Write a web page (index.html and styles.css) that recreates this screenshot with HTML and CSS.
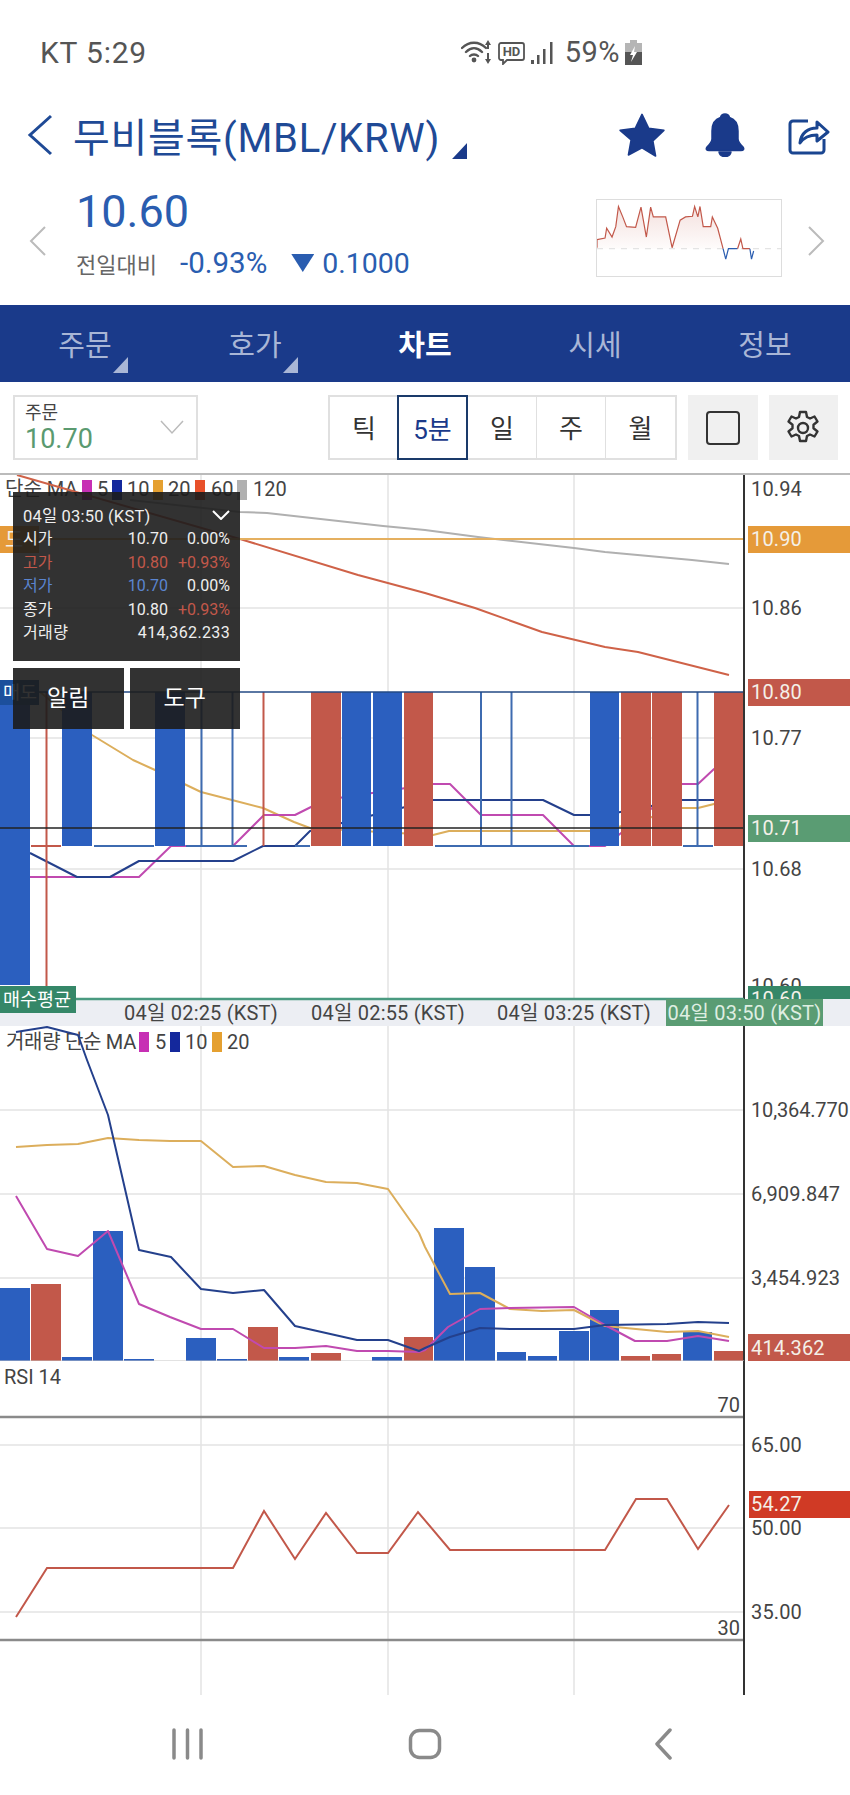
FILE: index.html
```html
<!DOCTYPE html>
<html>
<head>
    <title>무비블록 차트</title>
    <link rel="stylesheet" href="styles.css">
</head>
<body>
    <div class="status-bar">
        <span class="carrier">KT 5:29</span>
        <div class="status-icons">
            <svg class="wifi-icon" width="32" height="25" viewBox="0 0 32 25">
                <path class="st-line" d="M1 8C8 1 18 1 25 8M5 12C10 7 16 7 21 12M9 16C11 14 15 14 17 16"/>
                <circle class="st-fill" cx="13" cy="20" r="2.4"/>
                <path class="st-fill" d="M27 0l3 5h-2v4h-2V5h-2zM26 13h2v6h2l-3 5-3-5h2z"/>
            </svg>
            <svg class="hd-icon" width="27" height="23" viewBox="0 0 27 23">
                <path class="st-thin" d="M3 1h21a2 2 0 0 1 2 2v13a2 2 0 0 1-2 2H9l-4 4v-4H3a2 2 0 0 1-2-2V3a2 2 0 0 1 2-2z"/>
                <text class="hd-text" x="13.5" y="14">HD</text>
            </svg>
            <svg class="signal-icon" width="22" height="22" viewBox="0 0 22 22">
                <rect class="st-fill" x="0" y="18" width="3" height="4"/>
                <rect class="st-fill" x="6" y="13" width="2.5" height="9"/>
                <rect class="st-fill" x="12" y="7" width="2.5" height="15"/>
                <rect class="st-fill" x="19" y="0" width="2.5" height="22"/>
            </svg>
            <span class="battery-text">59%</span>
            <svg class="battery-icon" width="17" height="25" viewBox="0 0 17 25">
                <rect x="5" y="0" width="7" height="3" fill="#b5b5b5"/>
                <rect x="0" y="3" width="17" height="9" fill="#b5b5b5"/>
                <rect x="0" y="12" width="17" height="13" fill="#555"/>
                <path d="M10 6l-5 9h3l-2 7 6-10H9z" fill="#fff"/>
            </svg>
        </div>
    </div>

    <div class="title-bar">
        <svg class="back-icon" width="26" height="42" viewBox="0 0 26 42">
            <path d="M24 2L3 21l21 19"/>
        </svg>
        <span class="coin-name">무비블록(MBL/KRW)</span>
        <span class="corner-mark title-mark"></span>
        <div class="title-actions">
            <svg class="star-icon" width="52" height="48" viewBox="0 0 48 44">
                <path class="navy-fill" d="M24 3l6.2 12.8 14 1.9-10.2 9.8 2.5 13.9L24 33.8l-12.5 6.6L14 26.5 3.8 17.7l14-1.9z"/>
            </svg>
            <svg class="bell-icon" width="40" height="44" viewBox="0 0 40 44">
                <path class="navy-fill" d="M20 1c2.500 0 4 1.500 4.500 3.500C31 6.500 33 12 33 18v8c0 3 2 5 5 8 1.500 2 .5 3.500-2 3.500H4c-2.500 0-3.500-1.500-2-3.500 3-3 5-5 5-8v-8c0-6 2-11.500 8.500-13.500C16 2.500 17.500 1 20 1z"/>
                <path class="navy-fill" d="M14 39h12c-.5 3-3 4.500-6 4.500S14.500 42 14 39z"/>
            </svg>
            <svg class="share-icon" width="42" height="40" viewBox="0 0 42 40">
                <path class="navy-line" d="M20 6H5a3 3 0 0 0-3 3v26a3 3 0 0 0 3 3h28a3 3 0 0 0 3-3V24"/>
                <path class="navy-line" d="M12 28c1-10 8-15 17-15V7l11 10-11 9v-6c-7 0-13 2-17 8z"/>
            </svg>
        </div>
    </div>

    <div class="quote-bar">
        <svg class="quote-arrow arrow-left" width="18" height="30" viewBox="0 0 18 30"><path d="M16 1L2 15l14 14"/></svg>
        <div class="quote-main">
            <div class="price">10.60</div>
            <div class="change-row">
                <span class="change-label">전일대비</span>
                <span class="change-pct">-0.93%</span>
                <span class="down-mark"></span>
                <span class="change-val">0.1000</span>
            </div>
        </div>
        <svg class="sparkline" width="186" height="78" viewBox="1100 598 343 234" preserveAspectRatio="none">
            <defs>
                <linearGradient id="sparkFade" x1="0" y1="0" x2="0" y2="1">
                    <stop offset="0" stop-color="#c2584a" stop-opacity="0.18"/>
                    <stop offset="1" stop-color="#c2584a" stop-opacity="0.02"/>
                </linearGradient>
            </defs>
            <path d="M1100 748V720L1115 715 1118 685 1128 712 1135 680 1140 618 1148 650 1155 680 1172 682 1182 620 1192 712 1200 620 1205 650 1228 650 1240 745 1255 660 1265 650 1278 648 1282 618 1288 650 1292 618 1298 680 1312 680 1315 650 1325 685 1335 748z" fill="url(#sparkFade)"/>
            <path class="spark-base" d="M1100 748H1443"/>
            <polyline class="spark-red" points="1100,745 1100,720 1115,715 1118,685 1128,712 1135,680 1140,618 1148,650 1155,680 1172,682 1182,620 1192,712 1200,620 1205,650 1228,650 1240,745 1255,660 1265,650 1278,648 1282,618 1288,650 1292,618 1298,680 1312,680 1315,650 1325,685 1335,748"/>
            <polyline class="spark-blue" points="1335,748 1340,780 1345,748 1362,748"/>
            <polyline class="spark-red" points="1362,748 1368,718 1372,748 1385,748"/>
            <polyline class="spark-blue" points="1385,748 1388,780 1392,755"/>
        </svg>
        <svg class="quote-arrow arrow-right" width="18" height="30" viewBox="0 0 18 30"><path d="M2 1l14 14L2 29"/></svg>
    </div>

    <div class="tabs">
        <div class="tab">주문<span class="corner-mark tab-mark"></span></div>
        <div class="tab">호가<span class="corner-mark tab-mark"></span></div>
        <div class="tab active">차트</div>
        <div class="tab">시세</div>
        <div class="tab">정보</div>
    </div>

    <div class="toolbar">
        <div class="price-select">
            <div class="select-text">
                <div class="select-label">주문</div>
                <div class="select-value">10.70</div>
            </div>
            <svg width="24" height="15" viewBox="0 0 24 15"><path d="M1 1l11 12L23 1"/></svg>
        </div>
        <div class="periods">
            <div class="period">틱</div>
            <div class="period selected">5분</div>
            <div class="period">일</div>
            <div class="period">주</div>
            <div class="period">월</div>
        </div>
        <div class="tool-btn">
            <div class="square-icon"></div>
        </div>
        <div class="tool-btn">
            <svg class="gear-icon" width="36" height="36" viewBox="0 0 36 36">
                <path d="M15 2h6l1 5 3 1.500 4.500-2 3 5-4 3.200v3.600l4 3.200-3 5-4.500-2-3 1.500-1 5h-6l-1-5-3-1.500-4.500 2-3-5 4-3.200v-3.600l-4-3.200 3-5 4.500 2 3-1.500z"/>
                <circle cx="18" cy="18" r="5"/>
            </svg>
        </div>
    </div>

    <div class="chart">
        <div class="price-pane">
            <svg class="pane" width="850" height="551" viewBox="0 475 850 551">
                <path class="grid" d="M201 475V999M388 475V999M574 475V999M0 608H744M0 738H744M0 869H744"/>

                <text class="legend" x="5" y="496">단순 MA</text>
                <rect class="sw-ma5" x="82" y="480" width="10" height="20"/>
                <text class="legend" x="97" y="496">5</text>
                <rect class="sw-ma10" x="112" y="480" width="10" height="20"/>
                <text class="legend" x="127" y="496">10</text>
                <rect class="sw-ma20" x="153" y="480" width="10" height="20"/>
                <text class="legend" x="168" y="496">20</text>
                <rect class="sw-ma60" x="195" y="480" width="10" height="20"/>
                <text class="legend" x="211" y="496">60</text>
                <rect class="sw-ma120" x="237" y="480" width="10" height="20"/>
                <text class="legend" x="253" y="496">120</text>

                <polyline class="ma ma120" points="130,500 240,512 267,513 383,526 425,530 478,537 574,548 605,552 692,560 729,564"/>
                <polyline class="ma ma60" points="17,475 240,539 358,575 425,593 475,608 542,632 605,647 638,652 729,675"/>
                <path class="line-gold" d="M0 539H744"/>
                <polyline class="ma ma20" points="40,692 92,735 133,760 155,770 201,792 232,800 263,808 294,822 310,828 433,835 449,831 605,831 682,808 698,808 714,804 729,800"/>
                <polyline class="ma ma5" points="30,877 139,877 171,846 233,846 264,815 295,815 325,800 433,784 450,784 481,815 543,815 574,846 605,846 682,784 698,784 714,769 729,760"/>
                <polyline class="ma ma10" points="30,853 77,877 110,877 139,861 233,861 263,846 295,846 310,831 433,800 543,800 574,815 605,815 682,800 714,800"/>

                <path class="wick-red" d="M31 846H61M46.500 692V987M263.500 692V846"/>
                <path class="wick-blue" d="M94 846H154M186 846H247M295 846H310M435 846H589M683 846H713M201.500 692V846M232.500 692V846M481 692V846M511.500 692V846M697.500 692V846"/>

                <rect class="bar-blue" x="0" y="692" width="30" height="293"/>
                <rect class="bar-blue" x="62" y="692" width="30" height="154"/>
                <rect class="bar-blue" x="155" y="692" width="30" height="154"/>
                <rect class="bar-red" x="311" y="692" width="30" height="154"/>
                <rect class="bar-blue" x="342" y="692" width="29" height="154"/>
                <rect class="bar-blue" x="373" y="692" width="29" height="154"/>
                <rect class="bar-red" x="404" y="692" width="29" height="154"/>
                <rect class="bar-blue" x="590" y="692" width="29" height="154"/>
                <rect class="bar-red" x="621" y="692" width="30" height="154"/>
                <rect class="bar-red" x="652" y="692" width="30" height="154"/>
                <rect class="bar-red" x="714" y="692" width="30" height="154"/>

                <path class="line-top" d="M0 692H744"/>
                <path class="line-cross" d="M0 828H744"/>
                <path class="axis" d="M744 475V999"/>

                <rect class="tag-gold" x="0" y="526" width="39" height="27"/>
                <text class="tag-text" x="5" y="547">도</text>
                <rect class="tag-sell" x="0" y="680" width="39" height="25"/>
                <text class="tag-small" x="3" y="699">매도</text>

                <text class="axis-text" x="751" y="496">10.94</text>
                <text class="axis-text" x="751" y="615">10.86</text>
                <text class="axis-text" x="751" y="745">10.77</text>
                <text class="axis-text" x="751" y="876">10.68</text>
                <text class="axis-text" x="751" y="993">10.60</text>

                <rect class="tag-gold" x="748" y="526" width="102" height="27"/>
                <text class="tag-text" x="751" y="546">10.90</text>
                <rect class="tag-red" x="748" y="679" width="102" height="27"/>
                <text class="tag-text" x="751" y="699">10.80</text>
                <rect class="tag-green" x="748" y="815" width="102" height="27"/>
                <text class="tag-text" x="751" y="835">10.71</text>
                <rect class="tag-avg" x="748" y="986" width="102" height="13"/>
                <text class="tag-text" x="751" y="1006">10.60</text>

                <rect class="time-strip" x="0" y="999" width="850" height="27"/>
                <path class="line-avg" d="M0 999H744"/>
                <text class="time-text" x="201" y="1020">04일 02:25 (KST)</text>
                <text class="time-text" x="388" y="1020">04일 02:55 (KST)</text>
                <text class="time-text" x="574" y="1020">04일 03:25 (KST)</text>
                <rect class="tag-green" x="666" y="999" width="157" height="27"/>
                <text class="time-text time-now" x="744.500" y="1020">04일 03:50 (KST)</text>

                <rect class="tag-avg" x="0" y="986" width="76" height="27"/>
                <text class="tag-small" x="3" y="1006">매수평균</text>
            </svg>

            <div class="popup">
                <div class="info-panel">
                    <div class="info-head">
                        <span>04일 03:50 (KST)</span>
                        <svg width="18" height="10" viewBox="0 0 18 10"><path d="M1 1l8 8 8-8"/></svg>
                    </div>
                    <div class="info-row"><span>시가</span><span>10.70</span><span>0.00%</span></div>
                    <div class="info-row up"><span>고가</span><span>10.80</span><span>+0.93%</span></div>
                    <div class="info-row"><span class="down">저가</span><span class="down">10.70</span><span>0.00%</span></div>
                    <div class="info-row"><span>종가</span><span>10.80</span><span class="up">+0.93%</span></div>
                    <div class="info-row volume-row"><span>거래량</span><span>414,362.233</span></div>
                </div>
                <div class="popup-btns">
                    <div class="popup-btn">알림</div>
                    <div class="popup-btn">도구</div>
                </div>
            </div>
        </div>

        <svg class="pane" width="850" height="335" viewBox="0 1026 850 335">
            <path class="grid" d="M201 1026V1361M388 1026V1361M574 1026V1361M0 1110H744M0 1194H744M0 1278H744"/>

            <text class="legend legend-vol" x="6" y="1049">거래량 단순 MA</text>
            <rect class="sw-ma5" x="139" y="1032" width="10" height="20"/>
            <text class="legend" x="155" y="1049">5</text>
            <rect class="sw-ma10" x="170" y="1032" width="10" height="20"/>
            <text class="legend" x="185" y="1049">10</text>
            <rect class="sw-ma20" x="212" y="1032" width="10" height="20"/>
            <text class="legend" x="227" y="1049">20</text>

            <rect class="bar-blue" x="0" y="1288" width="30" height="73"/>
            <rect class="bar-red" x="31" y="1284" width="30" height="77"/>
            <rect class="bar-blue" x="62" y="1357" width="30" height="4"/>
            <rect class="bar-blue" x="93" y="1231" width="30" height="130"/>
            <rect class="bar-blue" x="124" y="1359" width="30" height="2"/>
            <rect class="bar-blue" x="186" y="1338" width="30" height="23"/>
            <rect class="bar-blue" x="217" y="1359" width="30" height="2"/>
            <rect class="bar-red" x="248" y="1327" width="30" height="34"/>
            <rect class="bar-blue" x="279" y="1357" width="30" height="4"/>
            <rect class="bar-red" x="311" y="1353" width="30" height="8"/>
            <rect class="bar-blue" x="372" y="1357" width="30" height="4"/>
            <rect class="bar-red" x="404" y="1337" width="29" height="24"/>
            <rect class="bar-blue" x="434" y="1228" width="30" height="133"/>
            <rect class="bar-blue" x="465" y="1267" width="30" height="94"/>
            <rect class="bar-blue" x="497" y="1352" width="29" height="9"/>
            <rect class="bar-blue" x="528" y="1356" width="29" height="5"/>
            <rect class="bar-blue" x="559" y="1331" width="30" height="30"/>
            <rect class="bar-blue" x="590" y="1310" width="29" height="51"/>
            <rect class="bar-red" x="621" y="1356" width="29" height="5"/>
            <rect class="bar-red" x="652" y="1354" width="29" height="7"/>
            <rect class="bar-blue" x="683" y="1332" width="29" height="29"/>
            <rect class="bar-red" x="714" y="1351" width="30" height="10"/>

            <polyline class="ma ma20" points="16,1147 47,1145 78,1144 108,1138 139,1140 170,1141 201,1141 233,1167 264,1166 295,1175 326,1182 357,1183 388,1189 419,1233 425,1247 450,1294 480,1293 510,1309 542,1311 574,1310 605,1326 667,1332 698,1331 729,1337"/>
            <polyline class="ma ma5" points="16,1196 47,1249 78,1256 108,1231 139,1304 170,1317 201,1329 233,1329 264,1348 295,1348 326,1346 357,1351 388,1351 419,1352 425,1350 448,1327 480,1309 510,1308 574,1307 605,1325 635,1341 667,1341 698,1336 729,1341"/>
            <polyline class="ma ma10" points="16,1032 47,1027 78,1035 87,1060 108,1115 139,1250 171,1257 201,1289 233,1293 264,1290 295,1326 326,1333 357,1340 388,1340 419,1351 425,1348 450,1337 480,1328 510,1329 574,1329 605,1325 667,1324 698,1322 729,1323"/>

            <path class="axis" d="M744 1026V1361"/>
            <path class="base" d="M0 1361H744"/>

            <text class="axis-text axis-long" x="751" y="1117">10,364.770</text>
            <text class="axis-text" x="751" y="1201">6,909.847</text>
            <text class="axis-text" x="751" y="1285">3,454.923</text>
            <rect class="tag-red" x="748" y="1334" width="102" height="27"/>
            <text class="tag-text" x="751" y="1355">414.362</text>
        </svg>

        <svg class="pane" width="850" height="334" viewBox="0 1361 850 334">
            <path class="grid" d="M201 1361V1695M388 1361V1695M574 1361V1695M0 1445H744M0 1528H744M0 1612H744"/>
            <text class="legend" x="4" y="1384">RSI 14</text>
            <text class="rsi-limit" x="740" y="1412">70</text>
            <text class="rsi-limit" x="740" y="1635">30</text>
            <path class="rsi-band" d="M0 1417H744M0 1640H744"/>
            <polyline class="rsi-line" points="16,1617 47,1568 233,1568 264,1511 295,1559 326,1513 357,1553 388,1553 418,1512 450,1550 605,1550 636,1499 667,1499 698,1549 729,1505"/>
            <path class="axis" d="M744 1361V1695"/>
            <text class="axis-text" x="751" y="1452">65.00</text>
            <text class="axis-text" x="751" y="1535">50.00</text>
            <text class="axis-text" x="751" y="1619">35.00</text>
            <rect class="tag-rsi" x="749" y="1491" width="101" height="27"/>
            <text class="tag-text" x="751" y="1511">54.27</text>
        </svg>
    </div>

    <div class="nav-bar">
        <div class="nav-btn">
            <svg width="31" height="32" viewBox="0 0 31 32"><path d="M2 2V30M15.500 2V30M29 2V30"/></svg>
        </div>
        <div class="nav-btn">
            <svg width="34" height="32" viewBox="0 0 34 32"><rect x="2.500" y="2.500" width="29" height="27" rx="9"/></svg>
        </div>
        <div class="nav-btn">
            <svg width="18" height="32" viewBox="0 0 18 32"><path d="M16 2L3 16l13 14"/></svg>
        </div>
    </div>
</body>
</html>
```
FILE: styles.css
```css
body {
    margin: 0;
    width: 850px;
    height: 1795px;
    overflow: hidden;
    background-color: #fff;
    font-family: Roboto, "Noto Sans CJK KR", sans-serif;
    color: #444;
}

/* status bar */
.status-bar {
    display: flex;
    align-items: center;
    height: 104px;
    padding: 0 208px 0 40px;
    color: #555;
}

.carrier {
    font-size: 30px;
    letter-spacing: 0.8px;
}

.status-icons {
    display: flex;
    align-items: center;
    margin-left: auto;
}

.wifi-icon {
    margin-right: 5px;
}

.hd-icon {
    margin: 3px 6px 0 0;
}

.signal-icon {
    margin: 2px 12px 0 0;
}

.battery-text {
    font-size: 29px;
    letter-spacing: 0.5px;
    margin-right: 5px;
}

.st-line {
    fill: none;
    stroke: #555;
    stroke-width: 2.4;
    stroke-linecap: round;
}

.st-thin {
    fill: none;
    stroke: #555;
    stroke-width: 1.8;
}

.st-fill {
    fill: #555;
}

.hd-text {
    font-size: 13px;
    font-weight: 700;
    text-anchor: middle;
    fill: #555;
}

/* title */
.title-bar {
    display: flex;
    align-items: center;
    height: 62px;
    padding: 0 20px 0 27px;
}

.back-icon path {
    fill: none;
    stroke: #1f4a96;
    stroke-width: 3;
}

.coin-name {
    margin-left: 20px;
    font-size: 40px;
    color: #1f4a96;
    letter-spacing: 0.7px;
}

.corner-mark {
    display: block;
    width: 15px;
    height: 16px;
    clip-path: polygon(100% 0, 100% 100%, 0 100%);
}

.title-mark {
    margin: 32px 0 0 12px;
    background-color: #1a3a8a;
}

.title-actions {
    display: flex;
    align-items: center;
    margin-left: auto;
}

.bell-icon {
    margin-left: 37px;
}

.share-icon {
    margin-left: 43px;
}

.navy-fill {
    fill: #1a3a8a;
    stroke: #1a3a8a;
    stroke-width: 1.5;
    stroke-linejoin: round;
}

.navy-line {
    fill: none;
    stroke: #1a4590;
    stroke-width: 3;
    stroke-linejoin: round;
}

/* price summary */
.quote-bar {
    display: flex;
    height: 139px;
    padding-left: 29px;
}

.quote-arrow {
    margin-top: 60px;
}

.quote-arrow path {
    fill: none;
    stroke: #bbb;
    stroke-width: 2;
}

.quote-main {
    margin-left: 29px;
    padding-top: 21px;
    width: 520px;
}

.price {
    font-size: 45px;
    line-height: 50px;
    color: #2a5db0;
}

.change-row {
    display: flex;
    align-items: center;
    height: 32px;
    margin-top: 10px;
    color: #2a5db0;
    font-size: 28.500px;
}

.change-label {
    width: 104px;
    font-size: 22px;
    color: #666;
}

.change-pct {
    font-size: 29.500px;
}

.down-mark {
    width: 23px;
    height: 18px;
    margin: 0 8px 0 24px;
    background-color: #2a5db0;
    clip-path: polygon(0 0, 100% 0, 50% 100%);
}

.sparkline {
    margin-top: 33px;
    border: 1px solid #ddd;
    box-sizing: border-box;
}

.spark-base {
    fill: none;
    stroke: #ddd;
    stroke-dasharray: 6 6;
    vector-effect: non-scaling-stroke;
}

.spark-red,
.spark-blue {
    fill: none;
    stroke-width: 1.2;
    vector-effect: non-scaling-stroke;
}

.spark-red {
    stroke: #c2584a;
}

.spark-blue {
    stroke: #2a5db0;
}

.arrow-right {
    margin-left: 25px;
}

/* tabs */
.tabs {
    display: flex;
    height: 77px;
    background-color: #1a3a8a;
}

.tab {
    position: relative;
    flex: 1;
    text-align: center;
    line-height: 82px;
    font-size: 29px;
    color: #a9b6d6;
}

.tab.active {
    color: #fff;
    font-weight: 700;
}

.tab-mark {
    position: absolute;
    left: 113px;
    top: 52px;
    background-color: #a9b6d6;
}

/* toolbar */
.toolbar {
    display: flex;
    height: 91px;
    box-sizing: border-box;
    padding: 13px 12px 13px 13px;
}

.price-select {
    display: flex;
    align-items: center;
    justify-content: space-between;
    width: 185px;
    height: 65px;
    box-sizing: border-box;
    padding: 0 12px 0 10px;
    margin-right: auto;
    border: 2px solid #e0e0e0;
}

.price-select path {
    fill: none;
    stroke: #bbb;
    stroke-width: 1.5;
}

.select-label {
    font-size: 18px;
    line-height: 23px;
    color: #444;
}

.select-value {
    font-size: 27px;
    line-height: 31px;
    color: #5a9a70;
}

.periods {
    display: flex;
    height: 65px;
    box-sizing: border-box;
    border: 2px solid #e0e0e0;
    margin-right: 11px;
}

.period {
    width: 69px;
    box-sizing: border-box;
    border-right: 1px solid #e0e0e0;
    text-align: center;
    line-height: 65px;
    font-size: 26px;
    color: #333;
}

.period:last-child {
    border-right: none;
}

.period.selected {
    width: 71px;
    height: 65px;
    margin: -2px 0 -2px -2px;
    border: 2px solid #1a3a6a;
    line-height: 66px;
    color: #1a3a8a;
}

.tool-btn {
    display: flex;
    align-items: center;
    justify-content: center;
    width: 69.500px;
    height: 65px;
    margin-left: 11px;
    background-color: #f0f0f0;
}

.tool-btn:nth-child(3) {
    margin-left: 0;
}

.square-icon {
    width: 34px;
    height: 34px;
    box-sizing: border-box;
    border: 2.5px solid #333;
    border-radius: 4px;
}

.gear-icon path,
.gear-icon circle {
    fill: none;
    stroke: #333;
    stroke-width: 2.4;
    stroke-linejoin: round;
}

/* chart */
.chart {
    border-top: 2px solid #bbb;
}

.price-pane {
    position: relative;
}

.pane {
    display: block;
}

.grid {
    fill: none;
    stroke: #e4e4e4;
    stroke-width: 1.5;
}

.legend {
    font-size: 20px;
    fill: #444;
}

.legend-vol {
    letter-spacing: -0.3px;
}

.axis-text {
    font-size: 20px;
    letter-spacing: 0.15px;
    fill: #444;
}

.axis-text.axis-long {
    letter-spacing: -0.15px;
}

.tag-text {
    font-size: 20px;
    letter-spacing: 0.15px;
    fill: #f4f0e8;
}

.tag-small {
    font-size: 18.500px;
    fill: #fff;
}

.time-text {
    font-size: 20px;
    letter-spacing: 0.2px;
    fill: #444;
    text-anchor: middle;
}

.time-now {
    fill: #dfeee2;
}

.axis {
    fill: none;
    stroke: #333;
    stroke-width: 2;
}

.base {
    fill: none;
    stroke: #c4c4c4;
    stroke-width: 1;
}

.ma {
    fill: none;
    stroke-width: 2;
    stroke-linejoin: round;
}

.ma5 {
    stroke: #c04ab0;
}

.ma10 {
    stroke: #24408c;
}

.ma20 {
    stroke: #dcae5c;
}

.ma60 {
    stroke: #cf6248;
}

.ma120 {
    stroke: #b0b0b0;
}

.sw-ma5 {
    fill: #c72fb4;
}

.sw-ma10 {
    fill: #14289c;
}

.sw-ma20 {
    fill: #e5a030;
}

.sw-ma60 {
    fill: #e8502a;
}

.sw-ma120 {
    fill: #b0b0b0;
}

.bar-blue {
    fill: #2b5fbf;
}

.bar-red {
    fill: #c2584a;
}

.wick-red {
    fill: none;
    stroke: #c2584a;
    stroke-width: 2;
}

.wick-blue {
    fill: none;
    stroke: #3e6bb0;
    stroke-width: 2;
}

.line-top {
    fill: none;
    stroke: #234a85;
    stroke-width: 1.5;
}

.line-cross {
    fill: none;
    stroke: #222;
    stroke-width: 1.5;
}

.line-gold {
    fill: none;
    stroke: #e5b060;
    stroke-width: 2;
}

.line-avg {
    fill: none;
    stroke: #4a9a80;
    stroke-width: 2.5;
}

.tag-gold {
    fill: #e59a39;
}

.tag-red {
    fill: #c2584a;
}

.tag-green {
    fill: #5a9c73;
}

.tag-avg {
    fill: #358768;
}

.tag-sell {
    fill: #1c4f9c;
}

.tag-rsi {
    fill: #d03a25;
}

.time-strip {
    fill: #eceef3;
}

.rsi-band {
    fill: none;
    stroke: #8a8a8a;
    stroke-width: 2.5;
}

.rsi-line {
    fill: none;
    stroke: #c2584a;
    stroke-width: 2;
    stroke-linejoin: miter;
}

.rsi-limit {
    font-size: 20px;
    fill: #444;
    text-anchor: end;
}

/* popup over the price pane */
.popup {
    position: absolute;
    left: 13px;
    top: 17px;
    display: flex;
    flex-direction: column;
    gap: 7px;
    width: 227px;
}

.info-panel {
    height: 169px;
    box-sizing: border-box;
    padding: 11px 10px 0;
    background-color: rgba(28, 28, 28, 0.9);
    color: #eee;
    font-size: 16px;
}

.info-head {
    display: flex;
    align-items: center;
    justify-content: space-between;
    height: 24px;
    font-size: 16.500px;
    letter-spacing: 0.2px;
}

.info-head path {
    fill: none;
    stroke: #fff;
    stroke-width: 2;
}

.info-row {
    display: grid;
    grid-template-columns: 1fr 60px 62px;
    height: 23.600px;
    line-height: 23.600px;
}

.info-row span:nth-child(n+2) {
    text-align: right;
}

.info-row.up,
.info-row .up {
    color: #c2584a;
}

.info-row .down {
    color: #5b85d0;
}

.volume-row {
    grid-template-columns: 1fr auto;
    letter-spacing: 0.35px;
}

.popup-btns {
    display: flex;
    gap: 6px;
}

.popup-btn {
    flex: 1;
    height: 61px;
    line-height: 61px;
    text-align: center;
    font-size: 23px;
    color: #fff;
    background-color: rgba(28, 28, 28, 0.9);
}

/* bottom navigation */
.nav-bar {
    display: flex;
    justify-content: center;
    height: 98px;
    padding-top: 33px;
    box-sizing: border-box;
}

.nav-btn {
    width: 238px;
    text-align: center;
}

.nav-btn path,
.nav-btn rect {
    fill: none;
    stroke: #8a8a8a;
    stroke-width: 3.500;
    stroke-linecap: round;
    stroke-linejoin: round;
}
```
